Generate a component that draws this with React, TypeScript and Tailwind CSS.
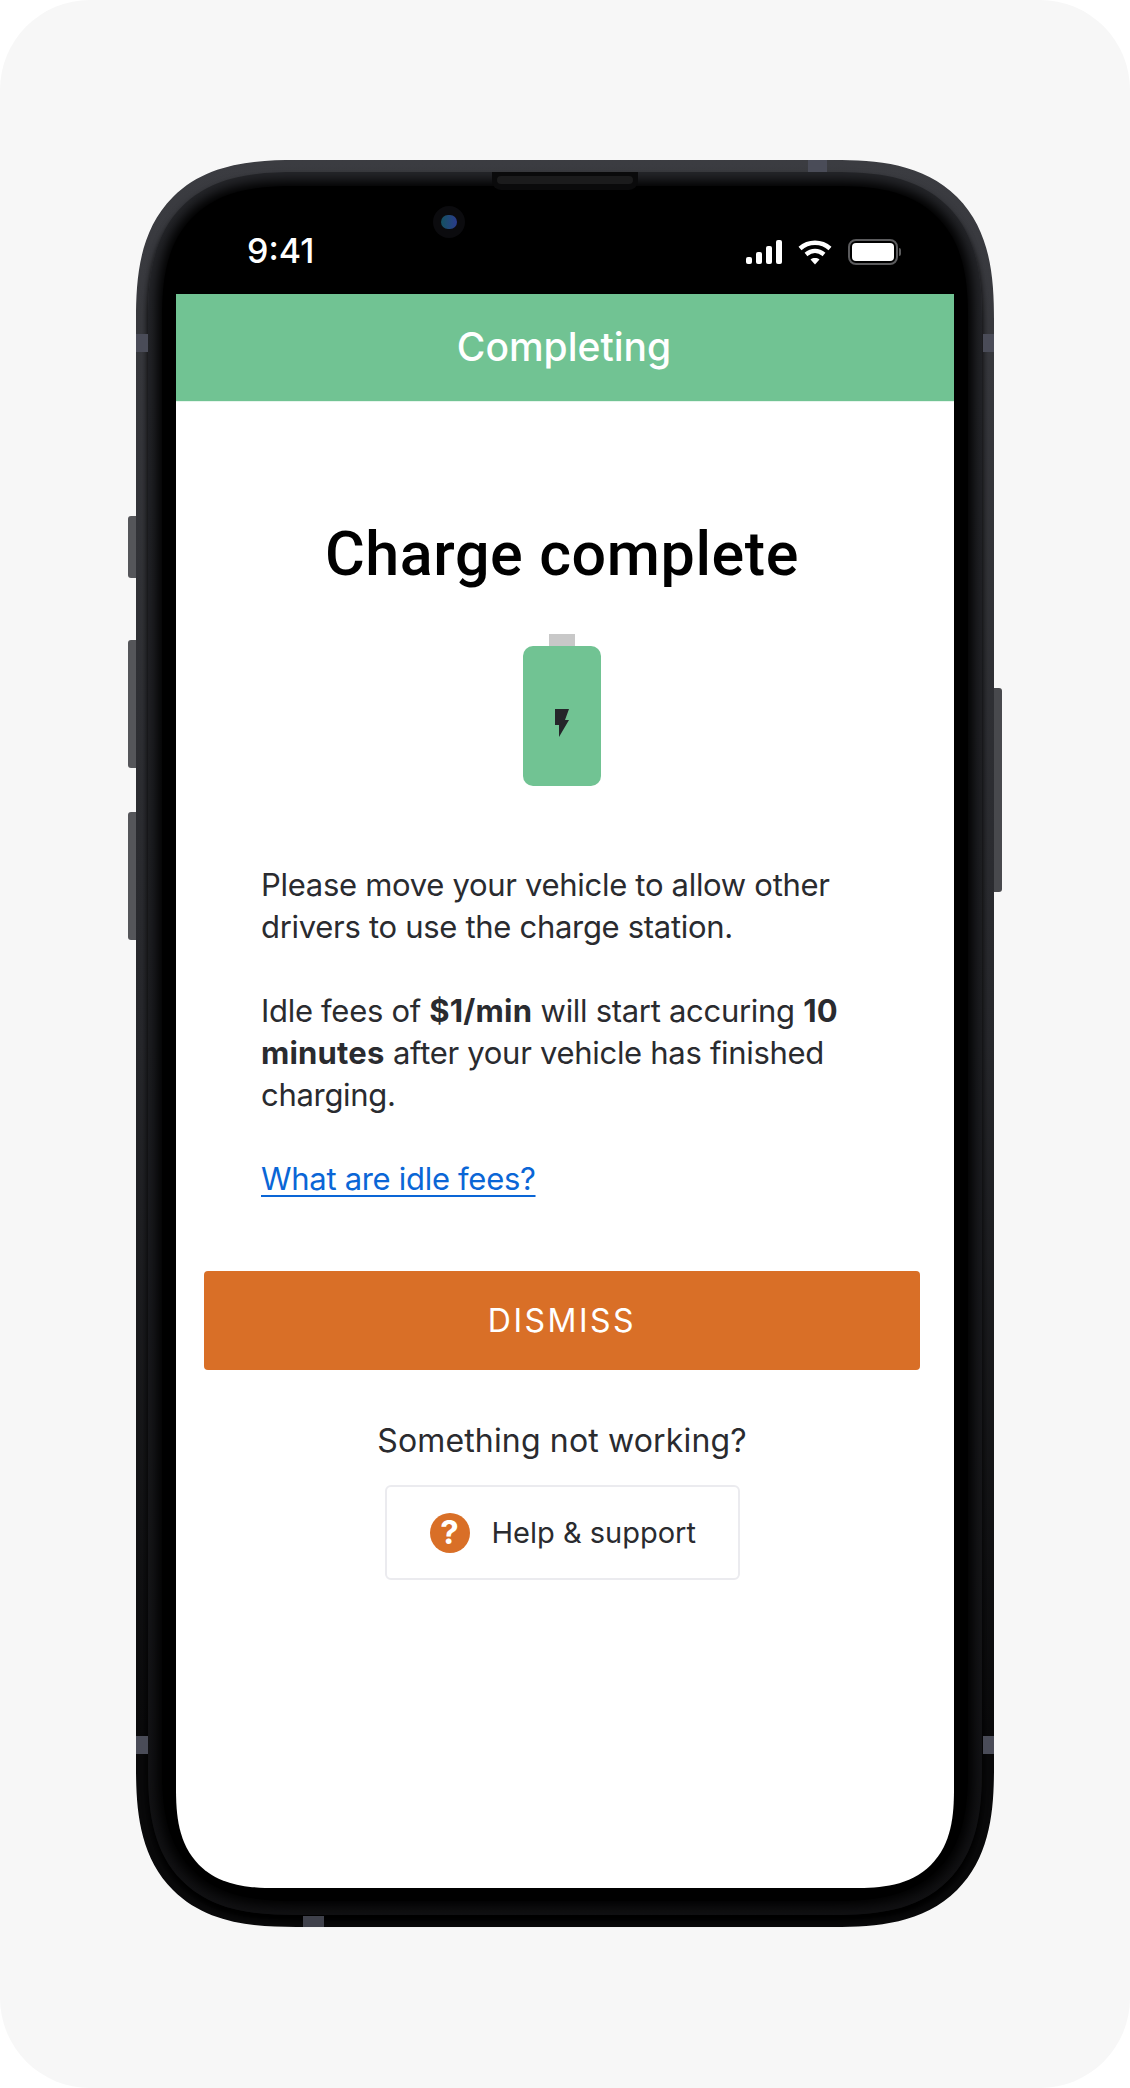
export default function App() {
  return (
    <div className="w-[1130px] h-[2088px] bg-white overflow-hidden font-['Inter',sans-serif]">
      <div className="h-full rounded-[90px] bg-[#f7f7f7] pt-[160px] pl-[136px]">
        <Phone />
      </div>
    </div>
  );
}

function Phone() {
  return (
    <div className="relative w-[858px] h-[1767px]">
      {/* Side buttons */}
      <div className="absolute left-[-8px] top-[356px] w-[8px] h-[62px] rounded-l-[3px] bg-[#55565a]" />
      <div className="absolute left-[-8px] top-[480px] w-[8px] h-[128px] rounded-l-[3px] bg-[#55565a]" />
      <div className="absolute left-[-8px] top-[652px] w-[8px] h-[128px] rounded-l-[3px] bg-[#55565a]" />
      <div className="absolute right-[-8px] top-[528px] w-[8px] h-[204px] rounded-r-[3px] bg-[#48494d]" />

      {/* Body */}
      <div className="h-full rounded-[160px] [corner-shape:superellipse(1.4)] bg-gradient-to-b from-[#3b3c41] via-[#26272b] via-50% to-[#09090a] to-90% p-[12px]">
        <div className="h-full rounded-[148px] [corner-shape:superellipse(1.4)] bg-gradient-to-b from-[#25262a] via-[#1d1e22] via-50% to-[#111113] shadow-[0_6px_6px_#000] p-[14px]">
          <div className="h-full flex flex-col rounded-[134px] [corner-shape:superellipse(1.4)] bg-black shadow-[0_0_12px_5px_#000] px-[14px] pb-[13px]">
            <StatusBar />
            <Screen />
          </div>
        </div>
      </div>

      {/* Antenna bands */}
      <div className="absolute left-0 top-[174px] w-[12px] h-[18px] bg-[#4a4c58]" />
      <div className="absolute right-0 top-[174px] w-[11px] h-[18px] bg-[#4a4c58]" />
      <div className="absolute left-0 top-[1576px] w-[12px] h-[18px] bg-[#4a4c58]" />
      <div className="absolute right-0 top-[1576px] w-[11px] h-[18px] bg-[#4a4c58]" />
      <div className="absolute left-[672px] top-0 w-[19px] h-[12px] bg-[#4a4c58]" />
      <div className="absolute left-[167px] bottom-0 w-[21px] h-[11px] bg-[#3f414b]" />

      {/* Speaker */}
      <div className="absolute left-[356px] top-[12px] w-[146px] h-[18px] rounded-b-[9px] bg-[#0a0a0b] flex justify-center pt-[4px]">
        <div className="w-[136px] h-[8px] rounded-full bg-[#1b1b1c]" />
      </div>

      {/* Camera */}
      <div className="absolute left-[297px] top-[46px] w-[32px] h-[32px] rounded-full bg-[#0b0b0e] flex items-center justify-center">
        <div className="w-[16px] h-[14px] rounded-full bg-gradient-to-r from-[#14505f] to-[#2a3a8c]" />
      </div>
    </div>
  );
}

function StatusBar() {
  return (
    <div className="h-[108px] shrink-0 flex items-start justify-between pl-[71px] pr-[53px] pt-[45px]">
      <span className="text-[34px] leading-[40px] font-medium text-white">9:41</span>
      <div className="flex items-center gap-[16px] pt-[8px]">
        <svg width="36" height="25" viewBox="0 0 36 25" fill="#fff">
          <rect x="0" y="17" width="6" height="7" rx="2" />
          <rect x="10" y="12" width="6" height="12" rx="2" />
          <rect x="20" y="6" width="6" height="18" rx="2" />
          <rect x="30" y="0" width="6" height="24" rx="2" />
        </svg>
        <svg width="34" height="25" viewBox="0 0 34 25" fill="none" stroke="#fff" strokeWidth="4.4">
          <path d="M2 8.5C10.5 .8 23.5 .8 32 8.5" />
          <path d="M8 14.5C13.5 9.8 20.5 9.8 26 14.5" />
          <path d="M12.5 19.5L17 24.5L21.5 19.5C18.8 17.6 15.2 17.6 12.5 19.5Z" fill="#fff" stroke="none" />
        </svg>
        <div className="flex items-center">
          <div className="w-[50px] h-[26px] rounded-[8px] border-[2px] border-[#5b5b5d] p-[2px]">
            <div className="h-full rounded-[4px] bg-white" />
          </div>
          <div className="ml-[1px] w-[2px] h-[8px] rounded-r-[2px] bg-[#5b5b5d]" />
        </div>
      </div>
    </div>
  );
}

function Screen() {
  return (
    <div className="flex-1 w-[778px] bg-white rounded-b-[100px] [corner-shape:superellipse(1.4)] overflow-hidden text-[#2a2b2f]">
      <div className="h-[108px] bg-[#71c393] flex items-center justify-center pr-[2px] border-b border-[#e6f5ec]">
        <span className="text-[39px] font-medium text-white">Completing</span>
      </div>

      <div className="w-[772px]">
        <h1 className="mt-[112px] text-center font-['Roboto',sans-serif] font-medium text-[61px] leading-[80px] text-black tracking-[0.6px]">
          Charge complete
        </h1>

        <div className="mt-[40px] flex flex-col items-center">
          <div className="w-[26px] h-[12px] bg-[#c8c8c8]" />
          <div className="w-[78px] h-[140px] rounded-[10px] bg-[#71c393] flex items-center justify-center">
            <svg className="mt-[14px]" width="15" height="28" viewBox="0 0 15 28" fill="#25262a">
              <path d="M0 0H14L10 11H14L4 28V16H0Z" />
            </svg>
          </div>
        </div>

        <div className="mt-[78px] pl-[85px] pr-[74px] text-[31px] leading-[42px] tracking-[-0.3px]">
          <p className="mb-[42px]">Please move your vehicle to allow other drivers to use the charge station.</p>
          <p className="mb-[42px]">
            Idle fees of <b className="font-bold tracking-[0.2px]">$1/min</b> will start accuring <b className="font-bold tracking-[0.2px]">10 minutes</b> after your vehicle has finished charging.
          </p>
          <a className="text-[#0a66d6] underline underline-offset-[5px] decoration-[2px]">What are idle fees?</a>
        </div>

        <div className="mt-[71px] mx-[28px] h-[99px] rounded-[4px] bg-[#d96f27] flex items-center justify-center text-white text-[32px] font-normal tracking-[2.5px]">
          DISMISS
        </div>

        <p className="mt-[50px] text-center text-[32px] leading-[42px] tracking-[0.15px]">Something not working?</p>

        <div className="mt-[23px] mx-auto w-[355px] h-[95px] rounded-[6px] border-[2px] border-[#ebebef] flex items-center pl-[43px] gap-[22px] text-[29px]">
          <div className="w-[40px] h-[40px] rounded-full bg-[#d96f27] flex items-center justify-center text-white text-[33px] font-bold leading-none">?</div>
          <span>Help &amp; support</span>
        </div>
      </div>
    </div>
  );
}
